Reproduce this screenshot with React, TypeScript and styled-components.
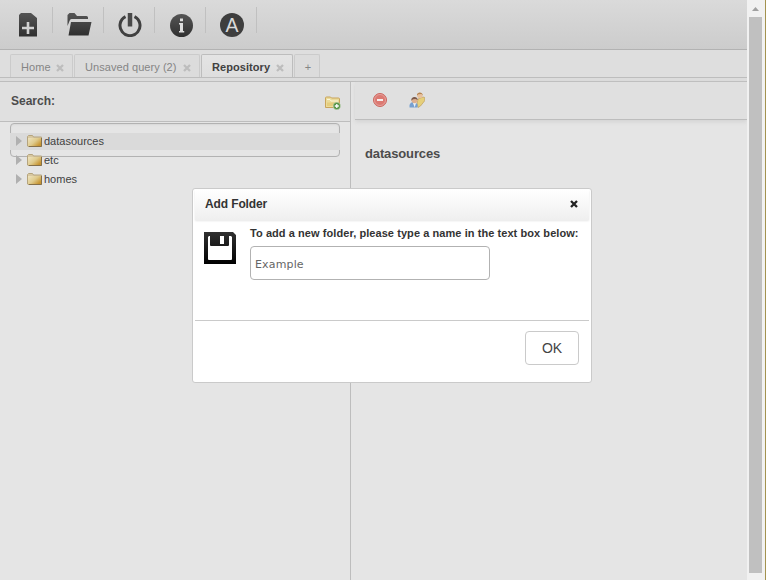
import React from "react";
import styled, { createGlobalStyle, css } from "styled-components";

const Global = createGlobalStyle`
  * { box-sizing: border-box; }
  html, body { margin: 0; overflow: hidden; }
  body { font-family: "Liberation Sans", Arial, sans-serif; font-size: 11px; color: #4c4c4c; }
  svg { display: block; flex: none; }
`;

const Window = styled.div`
  position: relative;
  display: flex;
  width: 766px;
  height: 580px;
  overflow: hidden;
  background: #e5e5e5;
`;
const Main = styled.div`
  display: flex;
  flex-direction: column;
  width: 747px;
`;
const Toolbar = styled.header`
  display: flex;
  height: 50px;
  padding: 7px 0 0 2px;
  background: linear-gradient(#dadada, #cccccc);
  border-bottom: 1px solid #b2b2b2;
`;
const ToolButton = styled.button`
  display: flex;
  align-items: center;
  justify-content: center;
  width: 51px;
  height: 26px;
  padding: 0 0 0 2px;
  background: none;
  border: 0;
  border-right: 1px solid #c0c0c0;
  svg { margin-top: 10px; }
`;
const TabBar = styled.nav`
  display: flex;
  align-items: flex-end;
  gap: 1px;
  height: 28px;
  padding-left: 10px;
  background: #dedede;
  border-bottom: 1px solid #bdbdbd;
`;
const Tab = styled.div<{ $width: number; $active?: boolean }>`
  display: flex;
  align-items: center;
  justify-content: space-between;
  width: ${(p) => p.$width}px;
  height: 23px;
  padding: 2px 8px 0 10px;
  border: 1px solid #cbcbcb;
  border-bottom: 0;
  border-radius: 2px 2px 0 0;
  color: #858585;
  background: #dcdcdc;
  letter-spacing: 0.06px;
  white-space: nowrap;
  svg { position: relative; top: 1px; }
  ${(p) =>
    p.$active &&
    css`
      color: #404040;
      font-weight: bold;
      background: linear-gradient(#e4e4e4, #dedede);
      border-color: #bdbdbd;
    `}
`;
const NewTab = styled(Tab)`
  justify-content: center;
  padding: 2px 0 0 2px;
`;
const Workspace = styled.div`
  display: flex;
  flex: 1;
  margin-top: 3px;
  border-top: 1px solid #bdbdbd;
  box-shadow: 0 -3px #dcdcdc;
`;
const Sidebar = styled.aside`
  width: 351px;
  border-right: 1px solid #bdbdbd;
`;
const SearchHeader = styled.div`
  display: flex;
  align-items: center;
  justify-content: space-between;
  height: 40px;
  padding: 0 9px 2px 11px;
  background: #e0e0e0;
  border-bottom: 1px solid #bdbdbd;
  font-size: 12px;
  font-weight: bold;
  svg { margin-top: 5px; }
`;
const SearchBox = styled.div`
  width: 330px;
  height: 34px;
  margin: 1px 0 0 10px;
  border: 1px solid #b2b2b2;
  border-radius: 4px;
  box-shadow: inset 0 1px 2px #d8d8d8;
`;
const Tree = styled.ul`
  position: relative;
  display: flex;
  flex-direction: column;
  gap: 2px;
  width: 330px;
  margin: -24px 0 0 10px;
  padding: 0;
  list-style: none;
`;
const TreeRow = styled.li<{ $selected?: boolean }>`
  display: flex;
  align-items: center;
  height: 17px;
  padding: 0 0 2px 6px;
  color: #414141;
  background: ${(p) => (p.$selected ? "#dadada" : "transparent")};
  svg + svg { margin: 0 2px 0 5px; }
`;
const Detail = styled.main`
  flex: 1;
  padding-left: 4px;
`;
const DetailBar = styled.div`
  display: flex;
  gap: 21px;
  height: 38px;
  padding: 10px 0 0 17px;
  background: #e0e0e0;
  border-bottom: 1px solid #bdbdbd;
  box-shadow: 0 2px 4px #d4d4d4;
`;
const DetailTitle = styled.h1`
  margin: 26px 0 0 10px;
  font-size: 13px;
  line-height: 15px;
  letter-spacing: -0.13px;
`;
const Scrollbar = styled.div`
  display: flex;
  flex-direction: column;
  width: 19px;
  padding: 7px 0 0 2px;
  background: #f1f1f1;
  border-right: 1px solid #a3924f;
  svg { margin-left: 3px; }
`;
const Thumb = styled.div`
  width: 13px;
  height: 556px;
  margin-top: 6px;
  background: #c0c0c0;
`;
const Dialog = styled.section`
  position: absolute;
  left: 192px;
  top: 188px;
  width: 400px;
  height: 195px;
  padding: 1px 2px;
  background: #fff;
  border: 1px solid #cacaca;
  border-radius: 3px;
  color: #333;
`;
const DialogHeader = styled.div`
  display: flex;
  align-items: center;
  justify-content: space-between;
  height: 30px;
  padding: 0 11px 2px 10px;
  background: linear-gradient(#fff, #efefef);
  box-shadow: 0 1px 2px #e6e6e6;
  font-size: 12px;
  font-weight: bold;
  letter-spacing: -0.12px;
`;
const DialogBody = styled.div`
  display: flex;
  gap: 14px;
  height: 101px;
  padding: 12px 0 0 9px;
  border-bottom: 1px solid #cacaca;
`;
const Field = styled.label`
  display: flex;
  flex-direction: column;
  margin-top: -5px;
  font-weight: bold;
  line-height: 13px;
  letter-spacing: 0.068px;
  white-space: nowrap;
`;
const NameInput = styled.input`
  width: 240px;
  height: 34px;
  margin-top: 6px;
  padding: 2px 4px 0;
  border: 1px solid #b2b2b2;
  border-radius: 4px;
  outline: 0;
  color: #666;
  background: #fff;
  font: 11px "DejaVu Sans", sans-serif;
  letter-spacing: 0.15px;
`;
const DialogFooter = styled.div`
  display: flex;
  justify-content: flex-end;
  padding: 10px 10px 0 0;
`;
const OkButton = styled.button`
  width: 54px;
  height: 34px;
  padding: 0;
  border: 1px solid #cacaca;
  border-radius: 4px;
  background: #fff;
  color: #444;
  font: 14px "Liberation Sans", Arial, sans-serif;
`;

const Cross = ({ color = "#bdbdbd" }: { color?: string }) => (
  <svg width="8" height="8" viewBox="0 0 8 8">
    <path d="M1 1l6 6M7 1L1 7" stroke={color} strokeWidth="2.3" />
  </svg>
);

const Shade = () => (
  <defs>
    <linearGradient id="shade" x1="0" y1="0" x2="0" y2="1">
      <stop offset="0" stopColor="#555" />
      <stop offset="1" stopColor="#303030" />
    </linearGradient>
  </defs>
);

const NewIcon = () => (
  <svg width="24" height="24" viewBox="0 0 24 24">
    <Shade />
    <path fill="url(#shade)" fillRule="evenodd" d="M5 0h10l6 5v18.500H3V2zM10.700 9v4.700H6v2.600h4.700V21h2.600v-4.700H18v-2.600h-4.700V9z" />
  </svg>
);
const OpenIcon = () => (
  <svg width="25" height="24" viewBox="0 0 25 24">
    <path fill="url(#shade)" d="M.5 2L2.500 0h5l2.500 3H19.500q1.500 0 1.500 1.500V6H4.500Q3 6 2.500 8L.5 13zM4 9H24.500l-3 13.500H1.500z" />
  </svg>
);
const PowerIcon = () => (
  <svg width="24" height="24" viewBox="0 0 24 24">
    <path d="M7.500 3.700a10 10 0 1 0 9 0" fill="none" stroke="#404040" strokeWidth="3" />
    <path d="M12 0v13.500" stroke="#494949" strokeWidth="4.500" />
  </svg>
);
const InfoIcon = () => (
  <svg width="24" height="24" viewBox="0 0 24 24">
    <circle cx="12.500" cy="12.500" r="11.500" fill="url(#shade)" />
    <path fill="#dedede" d="M11 5.500h3v2.800h-3zM10 10h4v8h1.200v1.500h-5.200V18H11v-6.500h-1z" />
  </svg>
);
const LetterIcon = () => (
  <svg width="24" height="24" viewBox="0 0 24 24">
    <circle cx="12" cy="12" r="12" fill="#3e3e3e" />
    <text x="12" y="18.800" textAnchor="middle" fill="#dadada" fontFamily="Liberation Sans" fontSize="19.500">A</text>
  </svg>
);
const AddFolderIcon = () => (
  <svg width="16" height="14" viewBox="0 0 16 14">
    <path d="M.5 11.500V2q0-1 1-1h4l1 1h7q1 0 1 1v8.500z" fill="#eadb9b" stroke="#c9a45b" />
    <path d="M2 3.500h3l1 1.500h7" fill="none" stroke="#fbf5d8" />
    <path d="M2 10V6.500h11V10z" fill="#e5cd7c" />
    <circle cx="11.800" cy="10" r="3.700" fill="#569345" stroke="#d9e0cf" strokeWidth=".5" />
    <path d="M9.800 10h4m-2-2v4" stroke="#fff" strokeWidth="1.300" />
  </svg>
);
const RemoveIcon = () => (
  <svg width="16" height="16" viewBox="0 0 16 16">
    <circle cx="8" cy="8" r="6.500" fill="#dc7972" stroke="#cc665f" />
    <circle cx="8" cy="8" r="5.500" fill="none" stroke="#e6aaa5" strokeWidth=".8" />
    <path d="M5 8h6" stroke="#f5eeee" strokeWidth="2" />
  </svg>
);
const UsersIcon = () => (
  <svg width="16" height="16" viewBox="0 0 16 16">
    <path d="M8 12l1-5 5-2 1.700.5v3.300L11.500 14 9 15.500z" fill="#e5cf7b" stroke="#b89652" strokeWidth=".6" />
    <circle cx="10.800" cy="3.500" r="2.700" fill="#e8c19d" />
    <path d="M8 3.500C7.500-.6 14-.6 13.800 3.500L12.500 2l-3 .3z" fill="#b58450" />
    <path d="M.5 15.500V13q1-3 4-3l4 2v3.500z" fill="#77a0d0" />
    <path d="M4 11l1.700 4.500L7 11" fill="#eef2f5" />
    <circle cx="5.500" cy="8.300" r="2.900" fill="#deb08f" />
    <path d="M2.400 8.800C1.400 4 8.800 4 8.800 8L6.500 7 4 7.200z" fill="#7c5a4b" />
  </svg>
);
const TreeArrow = () => (
  <svg width="6" height="10" viewBox="0 0 6 10">
    <path d="M0 0l6 5-6 5z" fill="#b0b0b0" />
  </svg>
);
const FolderIcon = () => (
  <svg width="15" height="12" viewBox="0 0 15 12">
    <defs>
      <linearGradient id="gold" x1="0" y1="0" x2="1" y2=".7">
        <stop offset="0" stopColor="#eee3bf" />
        <stop offset=".55" stopColor="#dfcb8e" />
        <stop offset="1" stopColor="#c79532" />
      </linearGradient>
    </defs>
    <path d="M.5 11V1.500L1.500.5h4l1 1.500h8v9.500H1z" fill="#d8c8a1" stroke="#b5a47e" />
    <path d="M1 3h13v8H1z" fill="url(#gold)" />
    <path d="M14.500 3v8.500H2" fill="none" stroke="#85704a" />
  </svg>
);
const DiskIcon = () => (
  <svg width="32" height="32" viewBox="0 0 32 32">
    <defs>
      <linearGradient id="disk" x1="0" y1="0" x2="0" y2="1">
        <stop offset="0" stopColor="#303030" />
        <stop offset="1" stopColor="#000" />
      </linearGradient>
    </defs>
    <path fill="url(#disk)" fillRule="evenodd" d="M0 0h29l3 3v29H0zM4 5v22q0 1 1 1h22q1 0 1-1V5l-1-1h-2v9q0 1-1 1H7q-1 0-1-1V4H5zM16 4v8h4V4z" />
  </svg>
);

const tools = [NewIcon, OpenIcon, PowerIcon, InfoIcon, LetterIcon];
const folders = ["datasources", "etc", "homes"];

export default function App() {
  return (
    <>
      <Global />
      <Window>
        <Main>
          <Toolbar>
            {tools.map((Icon, i) => (
              <ToolButton key={i}><Icon /></ToolButton>
            ))}
          </Toolbar>
          <TabBar>
            <Tab $width={63}>Home <Cross /></Tab>
            <Tab $width={126}>Unsaved query (2) <Cross /></Tab>
            <Tab $width={92} $active>Repository <Cross /></Tab>
            <NewTab $width={26}>+</NewTab>
          </TabBar>
          <Workspace>
            <Sidebar>
              <SearchHeader>Search: <AddFolderIcon /></SearchHeader>
              <SearchBox />
              <Tree>
                {folders.map((name, i) => (
                  <TreeRow key={name} $selected={i === 0}>
                    <TreeArrow /><FolderIcon />{name}
                  </TreeRow>
                ))}
              </Tree>
            </Sidebar>
            <Detail>
              <DetailBar><RemoveIcon /><UsersIcon /></DetailBar>
              <DetailTitle>datasources</DetailTitle>
            </Detail>
          </Workspace>
        </Main>
        <Scrollbar>
          <svg width="7" height="4" viewBox="0 0 7 4"><path d="M0 4l3.500-4L7 4z" fill="#a0a0a0" /></svg>
          <Thumb />
        </Scrollbar>
        <Dialog>
          <DialogHeader>Add Folder <Cross color="#222" /></DialogHeader>
          <DialogBody>
            <DiskIcon />
            <Field>
              To add a new folder, please type a name in the text box below:
              <NameInput defaultValue="Example" />
            </Field>
          </DialogBody>
          <DialogFooter><OkButton>OK</OkButton></DialogFooter>
        </Dialog>
      </Window>
    </>
  );
}
